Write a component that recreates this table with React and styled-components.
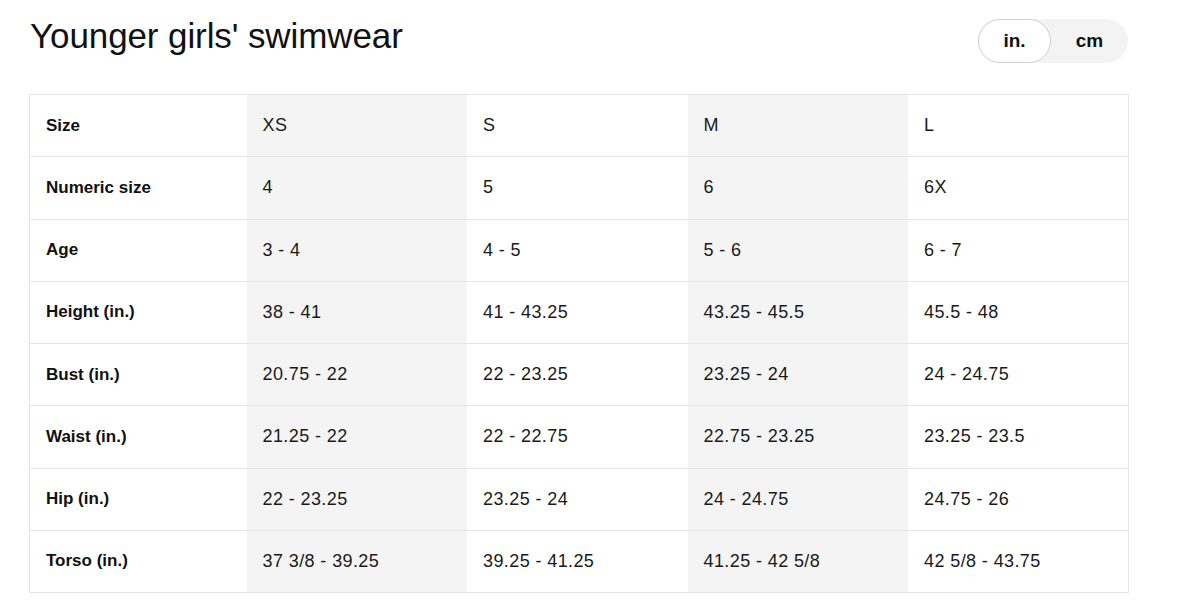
import React, { useState } from "react";
import styled, { createGlobalStyle } from "styled-components";

const rows = [
  ["Size", "XS", "S", "M", "L"],
  ["Numeric size", "4", "5", "6", "6X"],
  ["Age", "3 - 4", "4 - 5", "5 - 6", "6 - 7"],
  ["Height (in.)", "38 - 41", "41 - 43.25", "43.25 - 45.5", "45.5 - 48"],
  ["Bust (in.)", "20.75 - 22", "22 - 23.25", "23.25 - 24", "24 - 24.75"],
  ["Waist (in.)", "21.25 - 22", "22 - 22.75", "22.75 - 23.25", "23.25 - 23.5"],
  ["Hip (in.)", "22 - 23.25", "23.25 - 24", "24 - 24.75", "24.75 - 26"],
  ["Torso (in.)", "37 3/8 - 39.25", "39.25 - 41.25", "41.25 - 42 5/8", "42 5/8 - 43.75"],
];

const App = () => {
  const [unit, setUnit] = useState("in");

  return (
    <Page>
      <GlobalStyle />
      <Header>
        <Title>Younger girls' swimwear</Title>
        <Toggle>
          <ToggleBtn active={unit === "in"} onClick={() => setUnit("in")}>
            in.
          </ToggleBtn>
          <ToggleBtn active={unit === "cm"} onClick={() => setUnit("cm")}>
            cm
          </ToggleBtn>
        </Toggle>
      </Header>
      <Table>
        <colgroup>
          <col style={{ width: "217px" }} />
          <col />
          <col />
          <col />
          <col />
        </colgroup>
        <tbody>
          {rows.map((row, i) => (
            <Row key={i}>
              {row.map((cell, j) =>
                j === 0 ? (
                  <Label key={j}>{cell}</Label>
                ) : (
                  <Cell key={j} shaded={j % 2 === 1}>
                    {cell}
                  </Cell>
                )
              )}
            </Row>
          ))}
        </tbody>
      </Table>
    </Page>
  );
};

export default App;

const GlobalStyle = createGlobalStyle`
  body {
    margin: 0;
    background: #fff;
    font-family: "Liberation Sans", Arial, sans-serif;
    color: #111;
  }
`;

const Page = styled.div`
  padding: 19px 49px 0 29px;
`;

const Header = styled.div`
  display: flex;
  justify-content: space-between;
  align-items: flex-start;
  height: 75px;
`;

const Title = styled.h1`
  margin: 0;
  padding-left: 1px;
  font-size: 35px;
  font-weight: 400;
  line-height: 34px;
  letter-spacing: -0.1px;
  color: #111;
`;

const Toggle = styled.div`
  display: flex;
  width: 150px;
  height: 44px;
  border-radius: 22px;
  background: #f3f3f3;
`;

const ToggleBtn = styled.button`
  all: unset;
  box-sizing: border-box;
  width: ${(p) => (p.active ? "73px" : "77px")};
  height: 44px;
  border-radius: 22px;
  display: flex;
  align-items: center;
  justify-content: center;
  font-family: "Liberation Sans", Arial, sans-serif;
  font-size: 19px;
  font-weight: 600;
  color: #111;
  background: ${(p) => (p.active ? "#fff" : "transparent")};
  border: ${(p) => (p.active ? "1px solid #cfcfcf" : "none")};
  cursor: pointer;
`;

const Table = styled.table`
  width: 1100px;
  border-collapse: collapse;
  table-layout: fixed;
  border: 1px solid #e5e5e5;
  font-size: 17px;
`;

const Row = styled.tr`
  height: 62.25px;
  border-bottom: 1px solid #e5e5e5;
`;

const Label = styled.td`
  padding: 0 16px;
  font-weight: 600;
  color: #111;
  background: #fff;
  vertical-align: middle;
`;

const Cell = styled.td`
  padding: 0 16px;
  color: #1a1a1a;
  font-size: 18px;
  letter-spacing: 0.4px;
  background: ${(p) => (p.shaded ? "#f4f4f4" : "#fff")};
  vertical-align: middle;
`;
